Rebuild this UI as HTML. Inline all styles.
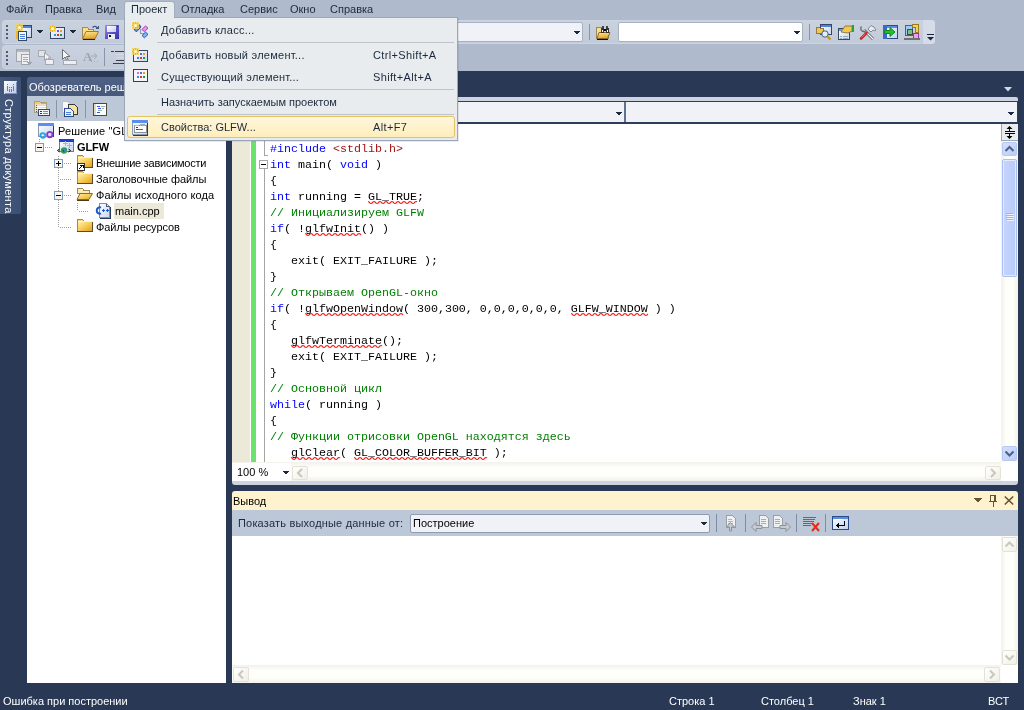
<!DOCTYPE html><html><head><meta charset="utf-8"><style>
*{margin:0;padding:0;box-sizing:border-box}
html,body{width:1024px;height:710px;overflow:hidden;background:#293955;font-family:"Liberation Sans",sans-serif;font-size:11px;color:#000}
.a{position:absolute}
svg{position:absolute;overflow:visible}
.t{position:absolute;white-space:nowrap;font-size:11px;line-height:13px}
.tb{position:absolute;border-radius:3px;background:linear-gradient(#CAD2DF,#C2CBDA);border:1px solid #CDD4E0}
.pn{position:absolute;background:#fff}
.code{position:absolute;left:270px;font-family:"Liberation Mono",monospace;font-size:11.67px;line-height:16px;white-space:pre;color:#000}
.kw{color:#0000FF}.cm{color:#008000}.st{color:#A31515}
.t,.code{will-change:transform}
</style></head><body>
<div class="a" style="left:0px;top:0px;width:1024px;height:71px;background:#AFBACD"></div>
<div class="t" style="left:6px;top:3px;color:#1B293E">Файл</div>
<div class="t" style="left:45px;top:3px;color:#1B293E">Правка</div>
<div class="t" style="left:96px;top:3px;color:#1B293E">Вид</div>
<div class="t" style="left:181px;top:3px;color:#1B293E">Отладка</div>
<div class="t" style="left:240px;top:3px;color:#1B293E">Сервис</div>
<div class="t" style="left:290px;top:3px;color:#1B293E">Окно</div>
<div class="t" style="left:330px;top:3px;color:#1B293E">Справка</div>
<div class="tb" style="left:2px;top:20px;width:922px;height:24px"></div>
<div class="a" style="left:923px;top:20px;width:12px;height:24px;background:#D5DCE8;border-radius:0 3px 3px 0"></div>
<div class="tb" style="left:2px;top:45px;width:200px;height:24px"></div>
<div class="a" style="left:6px;top:25px;width:2px;height:2px;background:#4B5B75"></div>
<div class="a" style="left:6px;top:29px;width:2px;height:2px;background:#4B5B75"></div>
<div class="a" style="left:6px;top:33px;width:2px;height:2px;background:#4B5B75"></div>
<div class="a" style="left:6px;top:37px;width:2px;height:2px;background:#4B5B75"></div>
<div class="a" style="left:6px;top:51px;width:2px;height:2px;background:#4B5B75"></div>
<div class="a" style="left:6px;top:55px;width:2px;height:2px;background:#4B5B75"></div>
<div class="a" style="left:6px;top:59px;width:2px;height:2px;background:#4B5B75"></div>
<div class="a" style="left:6px;top:63px;width:2px;height:2px;background:#4B5B75"></div>
<svg style="left:16px;top:24px;" width="17" height="17" viewBox="0 0 17 17" shape-rendering="crispEdges">
<defs><linearGradient id="wg" x1="0" y1="0" x2="1" y2="1"><stop offset="0" stop-color="#FFFFFF"/><stop offset="1" stop-color="#C8D6F0"/></linearGradient></defs>
<rect x="3.5" y="1.5" width="12" height="12" fill="url(#wg)" stroke="#34466A"/>
<rect x="4" y="2" width="11" height="2" fill="#4D86D9"/>
<rect x="2.5" y="7.5" width="8" height="9" fill="#F4F7FD" stroke="#34466A"/>
<rect x="0" y="7" width="2" height="8" fill="#F0B828"/>
<path d="M4 10h5M4 12h5M4 14h5" stroke="#4A7ED6"/>
<g shape-rendering="auto"><rect x="0" y="0" width="7" height="7" fill="#F3D35A" opacity="0.85"/><path d="M3.5 0v7M0 3.5h7M1 1l5 5M6 1l-5 5" stroke="#E8B820" stroke-width="1"/><circle cx="3.5" cy="3.5" r="1.6" fill="#FFFBE0"/></g></svg>
<svg style="left:37px;top:30px;" width="6" height="3" viewBox="0 0 6 3" shape-rendering="crispEdges"><rect x="0" y="0" width="6" height="1" fill="#1B293E"/><rect x="1" y="1" width="4" height="1" fill="#1B293E"/><rect x="2" y="2" width="2" height="1" fill="#1B293E"/></svg>
<svg style="left:49px;top:25px;" width="17" height="15" viewBox="0 0 17 15" shape-rendering="crispEdges">
<rect x="1.5" y="2.5" width="14" height="11" fill="url(#wg)" stroke="#34466A"/>
<rect x="8" y="5" width="2" height="2" fill="#6B5CE0"/><rect x="11" y="5" width="2" height="2" fill="#F29A1F"/>
<rect x="5" y="9" width="2" height="2" fill="#2E8DE8"/><rect x="8" y="9" width="2" height="2" fill="#E8351E"/><rect x="11" y="9" width="2" height="2" fill="#1E9A2E"/>
<g shape-rendering="auto"><rect x="0" y="0" width="7" height="7" fill="#F3D35A" opacity="0.85"/><path d="M3.5 0v7M0 3.5h7M1 1l5 5M6 1l-5 5" stroke="#E8B820" stroke-width="1"/><circle cx="3.5" cy="3.5" r="1.6" fill="#FFFBE0"/></g></svg>
<svg style="left:70px;top:30px;" width="6" height="3" viewBox="0 0 6 3" shape-rendering="crispEdges"><rect x="0" y="0" width="6" height="1" fill="#1B293E"/><rect x="1" y="1" width="4" height="1" fill="#1B293E"/><rect x="2" y="2" width="2" height="1" fill="#1B293E"/></svg>
<svg style="left:82px;top:25px;" width="17" height="15" viewBox="0 0 17 15" shape-rendering="crispEdges">
<defs><linearGradient id="ff" x1="0" y1="0" x2="0.3" y2="1"><stop offset="0" stop-color="#FFE894"/><stop offset="1" stop-color="#E4A626"/></linearGradient>
<linearGradient id="sv" x1="0" y1="0" x2="1" y2="1"><stop offset="0" stop-color="#9A94F4"/><stop offset="0.5" stop-color="#5C54D0"/><stop offset="1" stop-color="#3A32A0"/></linearGradient>
<linearGradient id="svl" x1="0" y1="0" x2="1" y2="1"><stop offset="0" stop-color="#FFFFFF"/><stop offset="1" stop-color="#C8CCE8"/></linearGradient></defs>
<path d="M0.5 2.5h5l1 1.5h5v9.5h-11z" fill="#F8E08A" stroke="#A08A5A"/>
<path d="M4 6.5h12.5l-3.5 7.5h-12.5z" fill="url(#ff)" stroke="#9A7A3A" shape-rendering="auto"/>
<path d="M1 14h12" stroke="#2A2010"/>
<path d="M10.5 2.5q2.5-2.5 5 0.5" stroke="#3A5A8A" fill="none" stroke-width="1.2" shape-rendering="auto"/>
<path d="M13.5 3.5h3v-3z" fill="#3A5A8A"/>
</svg>
<svg style="left:105px;top:25px;" width="14" height="14" viewBox="0 0 14 14" shape-rendering="crispEdges">
<rect x="0" y="0" width="14" height="14" fill="url(#sv)"/>
<rect x="2" y="1" width="9" height="6" fill="url(#svl)"/>
<rect x="3" y="9" width="7" height="5" fill="#ECECF4"/>
<rect x="4" y="10" width="2" height="2" fill="#111"/>
<rect x="12" y="1" width="1" height="1" fill="#222"/>
</svg>
<svg style="left:16px;top:49px;" width="17" height="17" viewBox="0 0 17 17" shape-rendering="crispEdges">
<rect x="0.5" y="0.5" width="13" height="12" fill="#E6E8EC" stroke="#9FA3AA"/>
<rect x="1" y="1" width="12" height="2" fill="#B5B9BF"/>
<rect x="5.5" y="5.5" width="8" height="10" fill="#F0F1F3" stroke="#9FA3AA"/>
<path d="M7 8h5M7 10h5M7 12h5" stroke="#A8ACB3"/>
<path d="M13.5 9v6M11.5 13l2 2.5l2-2.5" stroke="#9FA3AA" fill="none"/>
</svg>
<svg style="left:38px;top:50px;" width="16" height="15" viewBox="0 0 16 15" shape-rendering="crispEdges">
<rect x="0.5" y="0.5" width="7" height="6" fill="#E2E4E8" stroke="#A6AAB0"/>
<path d="M6.5 2.5v8l2-2l2 4l1.5-.7l-2-3.8h3z" fill="#F2F3F5" stroke="#9FA3AA" shape-rendering="auto"/>
<rect x="7.5" y="9.5" width="8" height="5" fill="#EEEFF2" stroke="#A6AAB0"/>
</svg>
<svg style="left:61px;top:49px;" width="16" height="17" viewBox="0 0 16 17" shape-rendering="crispEdges">
<path d="M1.5 0.5v10l2.5-2.5l2 4.5l1.5-.7l-2-4.3h3.5z" fill="#F4F5F7" stroke="#6C7078" shape-rendering="auto"/>
<rect x="2.5" y="11.5" width="13" height="4" fill="#EEEFF2" stroke="#A6AAB0"/>
</svg>
<div class="t" style="left:83px;top:50px;font-family:'Liberation Serif',serif;font-size:13px;color:#9FA3AA;font-weight:bold">A</div>
<svg style="left:91px;top:52px;" width="8" height="10" viewBox="0 0 8 10" shape-rendering="crispEdges"><path d="M0 4h6M3 1l3 3l-3 3" stroke="#A6AAB0" fill="none" shape-rendering="auto"/><path d="M0 9h1M3 9h1M6 9h1" stroke="#A6AAB0"/></svg>
<div class="a" style="left:104px;top:48px;width:1px;height:18px;background:#8894A8"></div>
<svg style="left:111px;top:50px;" width="15" height="15" viewBox="0 0 15 15" shape-rendering="crispEdges"><path d="M0 1h3M4 1h11M5 10h10M2 13h13" stroke="#3A3F48"/><path d="M5 4h10M5 7h10" stroke="#D8DBE0"/></svg>
<div class="a" style="left:440px;top:22px;width:143px;height:20px;background:#F0F2F7;border:1px solid #A7B2C3;border-radius:2px"></div>
<svg style="left:574px;top:31px;" width="6" height="3" viewBox="0 0 6 3" shape-rendering="crispEdges"><rect x="0" y="0" width="6" height="1" fill="#1B293E"/><rect x="1" y="1" width="4" height="1" fill="#1B293E"/><rect x="2" y="2" width="2" height="1" fill="#1B293E"/></svg>
<div class="a" style="left:589px;top:24px;width:1px;height:16px;background:#8894A8"></div>
<svg style="left:596px;top:25px;" width="17" height="15" viewBox="0 0 17 15" shape-rendering="crispEdges">
<path d="M0.5 2.5h6v1.5h6v9.5h-12z" fill="#F8E08A" stroke="#9A8A60"/>
<path d="M3 7.5h11l-2.5 6h-10.5z" fill="url(#ff)" stroke="#8A6A2A" shape-rendering="auto"/>
<path d="M1 14h11" stroke="#111"/>
<rect x="6" y="1" width="2" height="2" fill="#444"/><rect x="10" y="1" width="2" height="2" fill="#444"/>
<rect x="5" y="3" width="3" height="5" fill="#333"/><rect x="10" y="3" width="3" height="5" fill="#333"/>
<rect x="8" y="4" width="2" height="2" fill="#000"/>
<rect x="6" y="5" width="1" height="2" fill="#fff"/><rect x="11" y="5" width="1" height="2" fill="#fff"/>
</svg>
<div class="a" style="left:618px;top:22px;width:185px;height:20px;background:#fff;border:1px solid #A7B2C3;border-radius:2px"></div>
<svg style="left:794px;top:31px;" width="6" height="3" viewBox="0 0 6 3" shape-rendering="crispEdges"><rect x="0" y="0" width="6" height="1" fill="#1B293E"/><rect x="1" y="1" width="4" height="1" fill="#1B293E"/><rect x="2" y="2" width="2" height="1" fill="#1B293E"/></svg>
<div class="a" style="left:809px;top:24px;width:1px;height:16px;background:#8894A8"></div>
<svg style="left:816px;top:24px;" width="17" height="16" viewBox="0 0 17 16" shape-rendering="crispEdges">
<rect x="4.5" y="0.5" width="11" height="10" fill="url(#wg)" stroke="#34466A"/>
<rect x="5" y="1" width="10" height="2" fill="#4D86D9"/>
<path d="M0.5 3.5h3l1 1h3v5h-7z" fill="#F4C64A" stroke="#8C7A4A"/>
<circle cx="9" cy="10" r="3.2" fill="#DDF0FA" stroke="#4A5A72" shape-rendering="auto"/>
<path d="M11.5 12.5l3 3" stroke="#C8941E" stroke-width="2.2" shape-rendering="auto"/>
</svg>
<svg style="left:838px;top:24px;" width="17" height="16" viewBox="0 0 17 16" shape-rendering="crispEdges">
<rect x="0.5" y="4.5" width="11" height="11" fill="url(#wg)" stroke="#3A4A5A"/>
<rect x="1" y="5" width="3" height="2" fill="#6A9AE0"/>
<path d="M2 12h2M5 12h5M2 14h2M5 14h5" stroke="#9AAAC0"/>
<path d="M3 8l4-6h7v5l-4 2z" fill="#F4C84A" stroke="#7A6A3A" stroke-width="0.8" shape-rendering="auto"/>
<rect x="14" y="1" width="2" height="7" fill="#2AA03A"/>
</svg>
<svg style="left:859px;top:25px;" width="18" height="15" viewBox="0 0 18 15" shape-rendering="crispEdges">
<g shape-rendering="auto">
<path d="M5 5l9 9" stroke="#4A4E58" stroke-width="2.6"/>
<path d="M5 5l9 9" stroke="#FFFFFF" stroke-width="1.2"/>
<path d="M2.5 1.5a3 3 0 1 0 4.5 4" fill="none" stroke="#6A707A" stroke-width="1.4"/>
<path d="M9 4l3-3.5l3 1.5l2 3l-1 1l-2-1l-2 2z" fill="#E8EAEE" stroke="#7A808A" stroke-width="0.9"/>
<path d="M2 13.5l5.5-5.5" stroke="#C82828" stroke-width="2.6" stroke-linecap="round"/>
<path d="M2.5 12.5l4-4" stroke="#F07070" stroke-width="0.8"/>
</g>
</svg>
<svg style="left:883px;top:25px;" width="15" height="14" viewBox="0 0 15 14" shape-rendering="crispEdges">
<defs><linearGradient id="gw" x1="0" y1="0" x2="1" y2="1"><stop offset="0" stop-color="#FFFFFF"/><stop offset="1" stop-color="#C0D0F0"/></linearGradient></defs>
<rect x="0.5" y="0.5" width="14" height="13" fill="url(#gw)" stroke="#2A4A8A"/>
<rect x="1" y="1" width="13" height="2" fill="#5A8EE0"/>
<rect x="0" y="0" width="4" height="14" fill="#3C6AC0"/>
<path d="M1.5 5.5h5.5v-3l5 4.5l-5 4.5v-3h-5.5z" fill="#22C030" stroke="#108A1A" shape-rendering="auto"/>
</svg>
<svg style="left:904px;top:24px;" width="17" height="16" viewBox="0 0 17 16" shape-rendering="crispEdges">
<rect x="1.5" y="1.5" width="7" height="10" fill="#9CCCF4" stroke="#2A66C0"/>
<rect x="3.5" y="5.5" width="5" height="5" fill="#7CC080" stroke="#4A4A3A"/>
<path d="M8.5 0.5h6v8h-3v-5h-3z" fill="#F6D050" stroke="#9A7A20"/>
<rect x="9.5" y="9.5" width="5" height="5" fill="#F0A0F0" stroke="#A030A0"/>
<rect x="0" y="14" width="16" height="2" fill="#707070"/>
</svg>
<svg style="left:927px;top:34px;" width="7" height="7" viewBox="0 0 7 7" shape-rendering="crispEdges"><rect x="0" y="0" width="7" height="1" fill="#1B293E"/><path d="M0 3h7l-3.5 3.5z" fill="#1B293E" shape-rendering="auto"/></svg>
<div class="a" style="left:0px;top:77px;width:21px;height:137px;background:linear-gradient(90deg,#44587C,#3C5075);border-radius:0 2px 2px 0"></div>
<svg style="left:4px;top:81px;" width="13" height="13" viewBox="0 0 13 13" shape-rendering="crispEdges">
<defs><linearGradient id="lg" x1="0" y1="0" x2="1" y2="1"><stop offset="0" stop-color="#FFFFFF"/><stop offset="1" stop-color="#B8C8EC"/></linearGradient></defs>
<rect x="0" y="0" width="13" height="13" fill="url(#lg)"/>
<path d="M12.5 1v11.5h-12" stroke="#8090B8" fill="none"/>
<rect x="3" y="3" width="1" height="1" fill="#6A7AA0"/><rect x="9" y="3" width="1" height="1" fill="#6A7AA0"/>
<rect x="3" y="5" width="1" height="5" fill="#6A7AA0"/><rect x="5" y="6" width="1" height="1" fill="#6A7AA0"/><rect x="5" y="8" width="1" height="3" fill="#6A7AA0"/>
<rect x="7" y="6" width="1" height="1" fill="#6A7AA0"/><rect x="7" y="8" width="1" height="3" fill="#6A7AA0"/><rect x="9" y="5" width="1" height="5" fill="#6A7AA0"/>
</svg>
<div class="t" style="left:15px;top:99px;color:#fff;transform-origin:0 0;transform:rotate(90deg);letter-spacing:0.3px">Структура документа</div>
<div class="a" style="left:27px;top:77px;width:199px;height:19px;background:linear-gradient(#4F6285,#46597B);border-radius:3px 3px 0 0"></div>
<div class="t" style="left:28.5px;top:81px;color:#fff">Обозреватель решений - GLFW</div>
<div class="a" style="left:27px;top:96px;width:199px;height:25px;background:#BCC7D8"></div>
<svg style="left:34px;top:101px;" width="16" height="15" viewBox="0 0 16 15" shape-rendering="crispEdges">
<path d="M0.5 0.5h5v1h7v10h-12z" fill="#E8E0C0" stroke="#A8A080"/>
<rect x="1" y="1" width="5" height="2" fill="#F6CC5A"/>
<rect x="7" y="1.5" width="5" height="1.5" fill="#A8B8A8"/>
<path d="M3 5h9M3 7h9" stroke="#FFFFFF"/>
<path d="M2 4h1M2 6h1M2 8h1M2 10h1" stroke="#3A5A9A"/>
<rect x="4.5" y="8.5" width="11" height="6" fill="#F2F5FB" stroke="#34466A"/>
<path d="M6 10h2M6 12h2" stroke="#26365A"/><path d="M9 10h5M9 12h5" stroke="#7A8AA8"/>
</svg>
<div class="a" style="left:56px;top:100px;width:1px;height:18px;background:#8894A8"></div>
<svg style="left:62px;top:101px;" width="16" height="16" viewBox="0 0 16 16" shape-rendering="crispEdges">
<path d="M0.5 0.5h6v10h-6z" fill="#F6F6F6" stroke="#B8B8B8" stroke-dasharray="1 1"/>
<path d="M6.5 3.5h6l2.5 2.5v7.5h-8.5z" fill="#F6E2A0" stroke="#3A3A3A"/>
<path d="M2.5 7.5h6l2.5 2.5v5.5h-8.5z" fill="#E8F0FC" stroke="#2A4A8A"/>
<path d="M4 11h5M4 13h5" stroke="#4A7ED6"/>
</svg>
<div class="a" style="left:85px;top:100px;width:1px;height:18px;background:#8894A8"></div>
<svg style="left:93px;top:103px;" width="14" height="13" viewBox="0 0 14 13" shape-rendering="crispEdges">
<rect x="0.5" y="0.5" width="13" height="12" fill="#FFFFFF" stroke="#4A4A3A"/>
<rect x="1" y="1" width="2" height="11" fill="#E4DCC0"/>
<path d="M4 3h3M5 5h3M4 9h3" stroke="#2A5AE8"/><path d="M8 3h4M9 5h2M5 7h4" stroke="#9AA"/>
</svg>
<div class="a" style="left:27px;top:121px;width:199px;height:562px;background:#fff"></div>
<svg style="left:38px;top:123px;" width="17" height="17" viewBox="0 0 17 17" shape-rendering="crispEdges">
<rect x="0.5" y="0.5" width="15" height="13" fill="url(#wg)" stroke="#8A96AA"/>
<path d="M15.5 2v12" stroke="#3A3A3A"/>
<rect x="0" y="0" width="16" height="3" fill="#5A8EF0"/>
<g shape-rendering="auto" fill="none" stroke-width="1.8">
<circle cx="4.8" cy="12.5" r="2.4" stroke="#20A8E8"/>
<circle cx="11.8" cy="11.6" r="2.7" stroke="#8A3AC8"/>
</g>
</svg>
<div class="t" style="left:58px;top:125px;letter-spacing:0.15px">Решение "GLFW" (проектов: 1)</div>
<div class="a" style="left:39px;top:139px;width:1px;height:1px;background:#A0A0A0"></div>
<div class="a" style="left:39px;top:141px;width:1px;height:1px;background:#A0A0A0"></div>
<svg style="left:35px;top:143px;" width="9" height="9" viewBox="0 0 9 9" shape-rendering="crispEdges"><rect x="0.5" y="0.5" width="8" height="8" fill="#F6F4EC" stroke="#7F9DB9"/><path d="M2 4.5h5" stroke="#000"/></svg>
<div class="a" style="left:45px;top:147px;width:1px;height:1px;background:#A0A0A0"></div>
<div class="a" style="left:47px;top:147px;width:1px;height:1px;background:#A0A0A0"></div>
<div class="a" style="left:49px;top:147px;width:1px;height:1px;background:#A0A0A0"></div>
<div class="a" style="left:51px;top:147px;width:1px;height:1px;background:#A0A0A0"></div>
<svg style="left:57px;top:139px;" width="17" height="17" viewBox="0 0 17 17" shape-rendering="crispEdges">
<rect x="2.5" y="0.5" width="14" height="12" fill="url(#wg)" stroke="#6A7A9A"/>
<rect x="2" y="0" width="15" height="3" fill="#1A3ED8"/>
<path d="M8.5 2v5M6 4.5h5M12.5 4v5M10 6.5h5" stroke="#E8B820" stroke-width="1.8"/>
<circle cx="7" cy="11.5" r="3.2" fill="#2EA84A" shape-rendering="auto"/>
<path d="M5.5 10.5l2 1l-1 2M8 9l1.5 1.5" stroke="#3A7AD8" stroke-width="1.2" shape-rendering="auto"/>
<path d="M2.5 10l-2 1.5l2 1.5M11.5 10l2 1.5l-2 1.5" stroke="#000" fill="none" shape-rendering="auto"/>
</svg>
<div class="t" style="left:77px;top:141px;font-weight:bold;font-size:11px;letter-spacing:-0.1px">GLFW</div>
<div class="a" style="left:58px;top:156px;width:1px;height:1px;background:#A0A0A0"></div>
<div class="a" style="left:58px;top:158px;width:1px;height:1px;background:#A0A0A0"></div>
<div class="a" style="left:58px;top:160px;width:1px;height:1px;background:#A0A0A0"></div>
<div class="a" style="left:58px;top:162px;width:1px;height:1px;background:#A0A0A0"></div>
<div class="a" style="left:58px;top:164px;width:1px;height:1px;background:#A0A0A0"></div>
<div class="a" style="left:58px;top:166px;width:1px;height:1px;background:#A0A0A0"></div>
<div class="a" style="left:58px;top:168px;width:1px;height:1px;background:#A0A0A0"></div>
<div class="a" style="left:58px;top:170px;width:1px;height:1px;background:#A0A0A0"></div>
<div class="a" style="left:58px;top:172px;width:1px;height:1px;background:#A0A0A0"></div>
<div class="a" style="left:58px;top:174px;width:1px;height:1px;background:#A0A0A0"></div>
<div class="a" style="left:58px;top:176px;width:1px;height:1px;background:#A0A0A0"></div>
<div class="a" style="left:58px;top:178px;width:1px;height:1px;background:#A0A0A0"></div>
<div class="a" style="left:58px;top:180px;width:1px;height:1px;background:#A0A0A0"></div>
<div class="a" style="left:58px;top:182px;width:1px;height:1px;background:#A0A0A0"></div>
<div class="a" style="left:58px;top:184px;width:1px;height:1px;background:#A0A0A0"></div>
<div class="a" style="left:58px;top:186px;width:1px;height:1px;background:#A0A0A0"></div>
<div class="a" style="left:58px;top:188px;width:1px;height:1px;background:#A0A0A0"></div>
<div class="a" style="left:58px;top:190px;width:1px;height:1px;background:#A0A0A0"></div>
<div class="a" style="left:58px;top:192px;width:1px;height:1px;background:#A0A0A0"></div>
<div class="a" style="left:58px;top:194px;width:1px;height:1px;background:#A0A0A0"></div>
<div class="a" style="left:58px;top:196px;width:1px;height:1px;background:#A0A0A0"></div>
<div class="a" style="left:58px;top:198px;width:1px;height:1px;background:#A0A0A0"></div>
<div class="a" style="left:58px;top:200px;width:1px;height:1px;background:#A0A0A0"></div>
<div class="a" style="left:58px;top:202px;width:1px;height:1px;background:#A0A0A0"></div>
<div class="a" style="left:58px;top:204px;width:1px;height:1px;background:#A0A0A0"></div>
<div class="a" style="left:58px;top:206px;width:1px;height:1px;background:#A0A0A0"></div>
<div class="a" style="left:58px;top:208px;width:1px;height:1px;background:#A0A0A0"></div>
<div class="a" style="left:58px;top:210px;width:1px;height:1px;background:#A0A0A0"></div>
<div class="a" style="left:58px;top:212px;width:1px;height:1px;background:#A0A0A0"></div>
<div class="a" style="left:58px;top:214px;width:1px;height:1px;background:#A0A0A0"></div>
<div class="a" style="left:58px;top:216px;width:1px;height:1px;background:#A0A0A0"></div>
<div class="a" style="left:58px;top:218px;width:1px;height:1px;background:#A0A0A0"></div>
<div class="a" style="left:58px;top:220px;width:1px;height:1px;background:#A0A0A0"></div>
<div class="a" style="left:58px;top:222px;width:1px;height:1px;background:#A0A0A0"></div>
<div class="a" style="left:58px;top:224px;width:1px;height:1px;background:#A0A0A0"></div>
<div class="a" style="left:58px;top:226px;width:1px;height:1px;background:#A0A0A0"></div>
<svg width="0" height="0" style="left:0;top:0"><defs><linearGradient id="fg" x1="0" y1="0" x2="1" y2="1"><stop offset="0" stop-color="#FFF0B0"/><stop offset="0.55" stop-color="#F6C850"/><stop offset="1" stop-color="#E0A028"/></linearGradient></defs></svg>
<svg style="left:54px;top:159px;" width="9" height="9" viewBox="0 0 9 9" shape-rendering="crispEdges"><rect x="0.5" y="0.5" width="8" height="8" fill="#F6F4EC" stroke="#7F9DB9"/><path d="M2 4.5h5" stroke="#000"/><path d="M4.5 2v5" stroke="#000"/></svg>
<div class="a" style="left:64px;top:163px;width:1px;height:1px;background:#A0A0A0"></div>
<div class="a" style="left:66px;top:163px;width:1px;height:1px;background:#A0A0A0"></div>
<div class="a" style="left:68px;top:163px;width:1px;height:1px;background:#A0A0A0"></div>
<div class="a" style="left:70px;top:163px;width:1px;height:1px;background:#A0A0A0"></div>
<svg style="left:77px;top:155px;" width="16" height="16" viewBox="0 0 16 16" shape-rendering="crispEdges"><path d="M0.5 0.5h5l1 1.5h8v10.5h-14z" fill="#F6D880" stroke="#A08A5A"/><rect x="1" y="3" width="14" height="9" fill="url(#fg)"/><path d="M0.5 2.5h15" stroke="#FFF4C8"/><path d="M0 12.5h15.5v-10" stroke="#5A4A2A" fill="none"/><rect x="0.5" y="8.5" width="7" height="7" fill="#fff" stroke="#333"/><path d="M2 14l4-4M3 10h3v3" stroke="#000" fill="none"/></svg>
<div class="t" style="left:96px;top:157px;letter-spacing:-0.25px">Внешние зависимости</div>
<div class="a" style="left:60px;top:179px;width:1px;height:1px;background:#A0A0A0"></div>
<div class="a" style="left:62px;top:179px;width:1px;height:1px;background:#A0A0A0"></div>
<div class="a" style="left:64px;top:179px;width:1px;height:1px;background:#A0A0A0"></div>
<div class="a" style="left:66px;top:179px;width:1px;height:1px;background:#A0A0A0"></div>
<div class="a" style="left:68px;top:179px;width:1px;height:1px;background:#A0A0A0"></div>
<div class="a" style="left:70px;top:179px;width:1px;height:1px;background:#A0A0A0"></div>
<svg style="left:77px;top:171px;" width="16" height="16" viewBox="0 0 16 16" shape-rendering="crispEdges"><path d="M0.5 0.5h5l1 1.5h8v10.5h-14z" fill="#F6D880" stroke="#A08A5A"/><rect x="1" y="3" width="14" height="9" fill="url(#fg)"/><path d="M0.5 2.5h15" stroke="#FFF4C8"/><path d="M0 12.5h15.5v-10" stroke="#5A4A2A" fill="none"/></svg>
<div class="t" style="left:96px;top:173px;letter-spacing:-0.05px">Заголовочные файлы</div>
<svg style="left:54px;top:191px;" width="9" height="9" viewBox="0 0 9 9" shape-rendering="crispEdges"><rect x="0.5" y="0.5" width="8" height="8" fill="#F6F4EC" stroke="#7F9DB9"/><path d="M2 4.5h5" stroke="#000"/></svg>
<div class="a" style="left:64px;top:195px;width:1px;height:1px;background:#A0A0A0"></div>
<div class="a" style="left:66px;top:195px;width:1px;height:1px;background:#A0A0A0"></div>
<div class="a" style="left:68px;top:195px;width:1px;height:1px;background:#A0A0A0"></div>
<div class="a" style="left:70px;top:195px;width:1px;height:1px;background:#A0A0A0"></div>
<svg style="left:77px;top:187px;" width="16" height="16" viewBox="0 0 16 16" shape-rendering="crispEdges"><path d="M0.5 1.5h5l1 1.5h6v3h-12z" fill="#FBEBB8" stroke="#A08A5A"/><path d="M3 6.5h12.5l-3.5 6h-12z" fill="url(#fg)" stroke="#8A6A2A" shape-rendering="auto"/><path d="M0 13h12" stroke="#4A3A1A"/></svg>
<div class="t" style="left:96px;top:189px;letter-spacing:0.12px">Файлы исходного кода</div>
<div class="a" style="left:77px;top:203px;width:1px;height:1px;background:#A0A0A0"></div>
<div class="a" style="left:77px;top:205px;width:1px;height:1px;background:#A0A0A0"></div>
<div class="a" style="left:77px;top:207px;width:1px;height:1px;background:#A0A0A0"></div>
<div class="a" style="left:77px;top:209px;width:1px;height:1px;background:#A0A0A0"></div>
<div class="a" style="left:79px;top:211px;width:1px;height:1px;background:#A0A0A0"></div>
<div class="a" style="left:81px;top:211px;width:1px;height:1px;background:#A0A0A0"></div>
<div class="a" style="left:83px;top:211px;width:1px;height:1px;background:#A0A0A0"></div>
<div class="a" style="left:85px;top:211px;width:1px;height:1px;background:#A0A0A0"></div>
<div class="a" style="left:87px;top:211px;width:1px;height:1px;background:#A0A0A0"></div>
<svg style="left:95px;top:203px;" width="17" height="16" viewBox="0 0 17 16" shape-rendering="crispEdges">
<path d="M4.5 0.5h7l3 3v11h-10z" fill="url(#wg)" stroke="#7A90B8"/>
<path d="M15 4v11h-10" stroke="#2A3A5A" fill="none"/>
<path d="M11.5 0.5v3h3" stroke="#4A5A7A" fill="none"/>
<path d="M6 4.6a3 3.2 0 1 0 0 5.8" stroke="#1A5AC8" stroke-width="2" fill="none" shape-rendering="auto"/>
<path d="M7 7.5h3M8.5 6v3M11 7.5h3M12.5 6v3" stroke="#1A5AC8" stroke-width="1.2"/>
</svg>
<div class="a" style="left:114px;top:203px;width:50px;height:16px;background:#ECE9D8"></div>
<div class="t" style="left:115px;top:205px;">main.cpp</div>
<div class="a" style="left:60px;top:227px;width:1px;height:1px;background:#A0A0A0"></div>
<div class="a" style="left:62px;top:227px;width:1px;height:1px;background:#A0A0A0"></div>
<div class="a" style="left:64px;top:227px;width:1px;height:1px;background:#A0A0A0"></div>
<div class="a" style="left:66px;top:227px;width:1px;height:1px;background:#A0A0A0"></div>
<div class="a" style="left:68px;top:227px;width:1px;height:1px;background:#A0A0A0"></div>
<div class="a" style="left:70px;top:227px;width:1px;height:1px;background:#A0A0A0"></div>
<svg style="left:77px;top:219px;" width="16" height="16" viewBox="0 0 16 16" shape-rendering="crispEdges"><path d="M0.5 0.5h5l1 1.5h8v10.5h-14z" fill="#F6D880" stroke="#A08A5A"/><rect x="1" y="3" width="14" height="9" fill="url(#fg)"/><path d="M0.5 2.5h15" stroke="#FFF4C8"/><path d="M0 12.5h15.5v-10" stroke="#5A4A2A" fill="none"/></svg>
<div class="t" style="left:96px;top:221px;letter-spacing:-0.07px">Файлы ресурсов</div>
<div class="a" style="left:232px;top:97px;width:786px;height:4px;background:#CED4DF;border-radius:0 2px 0 0"></div>
<div class="a" style="left:232px;top:101px;width:786px;height:23px;background:#2E3D59"></div>
<div class="a" style="left:232px;top:102px;width:392px;height:20px;background:#F0F2F7"></div>
<div class="a" style="left:626px;top:102px;width:391px;height:20px;background:#F0F2F7"></div>
<div class="a" style="left:624px;top:102px;width:2px;height:20px;background:#62718C"></div>
<svg style="left:616px;top:112px;" width="6" height="3" viewBox="0 0 6 3" shape-rendering="crispEdges"><rect x="0" y="0" width="6" height="1" fill="#1B293E"/><rect x="1" y="1" width="4" height="1" fill="#1B293E"/><rect x="2" y="2" width="2" height="1" fill="#1B293E"/></svg>
<svg style="left:1008px;top:112px;" width="6" height="3" viewBox="0 0 6 3" shape-rendering="crispEdges"><rect x="0" y="0" width="6" height="1" fill="#1B293E"/><rect x="1" y="1" width="4" height="1" fill="#1B293E"/><rect x="2" y="2" width="2" height="1" fill="#1B293E"/></svg>
<svg style="left:1004px;top:87px;" width="8" height="5" viewBox="0 0 8 5" shape-rendering="crispEdges"><path d="M0 0h8l-4 4.5z" fill="#D3D9E4" shape-rendering="auto"/></svg>
<div class="a" style="left:232px;top:124px;width:786px;height:338px;background:#fff"></div>
<div class="a" style="left:232px;top:124px;width:18px;height:338px;background:#ECE9D8"></div>
<div class="a" style="left:251px;top:124px;width:5px;height:338px;background:#6CE26C"></div>
<div class="a" style="left:264px;top:124px;width:1px;height:31px;background:#A5A5A5"></div>
<div class="a" style="left:264px;top:155px;width:4px;height:1px;background:#A5A5A5"></div>
<svg style="left:259px;top:160px;" width="9" height="9" viewBox="0 0 9 9" shape-rendering="crispEdges"><rect x="0.5" y="0.5" width="8" height="8" fill="#fff" stroke="#A5A5A5"/><path d="M2 4.5h5" stroke="#000"/></svg>
<div class="a" style="left:264px;top:169px;width:1px;height:293px;background:#A5A5A5"></div>
<div class="code" style="top:141px;height:322px;overflow:hidden"><span class="kw">#include</span> <span class="st">&lt;stdlib.h&gt;</span>
<span class="kw">int</span> main( <span class="kw">void</span> )
{
<span class="kw">int</span> running = GL_TRUE;
<span class="cm">// Инициализируем GLFW</span>
<span class="kw">if</span>( !glfwInit() )
{
   exit( EXIT_FAILURE );
}
<span class="cm">// Открываем OpenGL-окно</span>
<span class="kw">if</span>( !glfwOpenWindow( 300,300, 0,0,0,0,0,0, GLFW_WINDOW ) )
{
   glfwTerminate();
   exit( EXIT_FAILURE );
}
<span class="cm">// Основной цикл</span>
<span class="kw">while</span>( running )
{
<span class="cm">// Функции отрисовки OpenGL находятся здесь</span>
   glClear( GL_COLOR_BUFFER_BIT );</div>
<svg style="left:368px;top:201px" width="49" height="3" viewBox="0 0 49 3"><polyline points="0.00,0.50 0.25,0.53 0.50,0.63 0.75,0.79 1.00,1.00 1.25,1.24 1.50,1.50 1.75,1.76 2.00,2.00 2.25,2.21 2.50,2.37 2.75,2.47 3.00,2.50 3.25,2.47 3.50,2.37 3.75,2.21 4.00,2.00 4.25,1.76 4.50,1.50 4.75,1.24 5.00,1.00 5.25,0.79 5.50,0.63 5.75,0.53 6.00,0.50 6.25,0.53 6.50,0.63 6.75,0.79 7.00,1.00 7.25,1.24 7.50,1.50 7.75,1.76 8.00,2.00 8.25,2.21 8.50,2.37 8.75,2.47 9.00,2.50 9.25,2.47 9.50,2.37 9.75,2.21 10.00,2.00 10.25,1.76 10.50,1.50 10.75,1.24 11.00,1.00 11.25,0.79 11.50,0.63 11.75,0.53 12.00,0.50 12.25,0.53 12.50,0.63 12.75,0.79 13.00,1.00 13.25,1.24 13.50,1.50 13.75,1.76 14.00,2.00 14.25,2.21 14.50,2.37 14.75,2.47 15.00,2.50 15.25,2.47 15.50,2.37 15.75,2.21 16.00,2.00 16.25,1.76 16.50,1.50 16.75,1.24 17.00,1.00 17.25,0.79 17.50,0.63 17.75,0.53 18.00,0.50 18.25,0.53 18.50,0.63 18.75,0.79 19.00,1.00 19.25,1.24 19.50,1.50 19.75,1.76 20.00,2.00 20.25,2.21 20.50,2.37 20.75,2.47 21.00,2.50 21.25,2.47 21.50,2.37 21.75,2.21 22.00,2.00 22.25,1.76 22.50,1.50 22.75,1.24 23.00,1.00 23.25,0.79 23.50,0.63 23.75,0.53 24.00,0.50 24.25,0.53 24.50,0.63 24.75,0.79 25.00,1.00 25.25,1.24 25.50,1.50 25.75,1.76 26.00,2.00 26.25,2.21 26.50,2.37 26.75,2.47 27.00,2.50 27.25,2.47 27.50,2.37 27.75,2.21 28.00,2.00 28.25,1.76 28.50,1.50 28.75,1.24 29.00,1.00 29.25,0.79 29.50,0.63 29.75,0.53 30.00,0.50 30.25,0.53 30.50,0.63 30.75,0.79 31.00,1.00 31.25,1.24 31.50,1.50 31.75,1.76 32.00,2.00 32.25,2.21 32.50,2.37 32.75,2.47 33.00,2.50 33.25,2.47 33.50,2.37 33.75,2.21 34.00,2.00 34.25,1.76 34.50,1.50 34.75,1.24 35.00,1.00 35.25,0.79 35.50,0.63 35.75,0.53 36.00,0.50 36.25,0.53 36.50,0.63 36.75,0.79 37.00,1.00 37.25,1.24 37.50,1.50 37.75,1.76 38.00,2.00 38.25,2.21 38.50,2.37 38.75,2.47 39.00,2.50 39.25,2.47 39.50,2.37 39.75,2.21 40.00,2.00 40.25,1.76 40.50,1.50 40.75,1.24 41.00,1.00 41.25,0.79 41.50,0.63 41.75,0.53 42.00,0.50 42.25,0.53 42.50,0.63 42.75,0.79 43.00,1.00 43.25,1.24 43.50,1.50 43.75,1.76 44.00,2.00 44.25,2.21 44.50,2.37 44.75,2.47 45.00,2.50 45.25,2.47 45.50,2.37 45.75,2.21 46.00,2.00 46.25,1.76 46.50,1.50 46.75,1.24 47.00,1.00 47.25,0.79 47.50,0.63 47.75,0.53 48.00,0.50 48.25,0.53 48.50,0.63 48.75,0.79 49.00,1.00" fill="none" stroke="#FF2020" stroke-width="1.1"/></svg>
<svg style="left:305px;top:233px" width="56" height="3" viewBox="0 0 56 3"><polyline points="0.00,0.50 0.25,0.53 0.50,0.63 0.75,0.79 1.00,1.00 1.25,1.24 1.50,1.50 1.75,1.76 2.00,2.00 2.25,2.21 2.50,2.37 2.75,2.47 3.00,2.50 3.25,2.47 3.50,2.37 3.75,2.21 4.00,2.00 4.25,1.76 4.50,1.50 4.75,1.24 5.00,1.00 5.25,0.79 5.50,0.63 5.75,0.53 6.00,0.50 6.25,0.53 6.50,0.63 6.75,0.79 7.00,1.00 7.25,1.24 7.50,1.50 7.75,1.76 8.00,2.00 8.25,2.21 8.50,2.37 8.75,2.47 9.00,2.50 9.25,2.47 9.50,2.37 9.75,2.21 10.00,2.00 10.25,1.76 10.50,1.50 10.75,1.24 11.00,1.00 11.25,0.79 11.50,0.63 11.75,0.53 12.00,0.50 12.25,0.53 12.50,0.63 12.75,0.79 13.00,1.00 13.25,1.24 13.50,1.50 13.75,1.76 14.00,2.00 14.25,2.21 14.50,2.37 14.75,2.47 15.00,2.50 15.25,2.47 15.50,2.37 15.75,2.21 16.00,2.00 16.25,1.76 16.50,1.50 16.75,1.24 17.00,1.00 17.25,0.79 17.50,0.63 17.75,0.53 18.00,0.50 18.25,0.53 18.50,0.63 18.75,0.79 19.00,1.00 19.25,1.24 19.50,1.50 19.75,1.76 20.00,2.00 20.25,2.21 20.50,2.37 20.75,2.47 21.00,2.50 21.25,2.47 21.50,2.37 21.75,2.21 22.00,2.00 22.25,1.76 22.50,1.50 22.75,1.24 23.00,1.00 23.25,0.79 23.50,0.63 23.75,0.53 24.00,0.50 24.25,0.53 24.50,0.63 24.75,0.79 25.00,1.00 25.25,1.24 25.50,1.50 25.75,1.76 26.00,2.00 26.25,2.21 26.50,2.37 26.75,2.47 27.00,2.50 27.25,2.47 27.50,2.37 27.75,2.21 28.00,2.00 28.25,1.76 28.50,1.50 28.75,1.24 29.00,1.00 29.25,0.79 29.50,0.63 29.75,0.53 30.00,0.50 30.25,0.53 30.50,0.63 30.75,0.79 31.00,1.00 31.25,1.24 31.50,1.50 31.75,1.76 32.00,2.00 32.25,2.21 32.50,2.37 32.75,2.47 33.00,2.50 33.25,2.47 33.50,2.37 33.75,2.21 34.00,2.00 34.25,1.76 34.50,1.50 34.75,1.24 35.00,1.00 35.25,0.79 35.50,0.63 35.75,0.53 36.00,0.50 36.25,0.53 36.50,0.63 36.75,0.79 37.00,1.00 37.25,1.24 37.50,1.50 37.75,1.76 38.00,2.00 38.25,2.21 38.50,2.37 38.75,2.47 39.00,2.50 39.25,2.47 39.50,2.37 39.75,2.21 40.00,2.00 40.25,1.76 40.50,1.50 40.75,1.24 41.00,1.00 41.25,0.79 41.50,0.63 41.75,0.53 42.00,0.50 42.25,0.53 42.50,0.63 42.75,0.79 43.00,1.00 43.25,1.24 43.50,1.50 43.75,1.76 44.00,2.00 44.25,2.21 44.50,2.37 44.75,2.47 45.00,2.50 45.25,2.47 45.50,2.37 45.75,2.21 46.00,2.00 46.25,1.76 46.50,1.50 46.75,1.24 47.00,1.00 47.25,0.79 47.50,0.63 47.75,0.53 48.00,0.50 48.25,0.53 48.50,0.63 48.75,0.79 49.00,1.00 49.25,1.24 49.50,1.50 49.75,1.76 50.00,2.00 50.25,2.21 50.50,2.37 50.75,2.47 51.00,2.50 51.25,2.47 51.50,2.37 51.75,2.21 52.00,2.00 52.25,1.76 52.50,1.50 52.75,1.24 53.00,1.00 53.25,0.79 53.50,0.63 53.75,0.53 54.00,0.50 54.25,0.53 54.50,0.63 54.75,0.79 55.00,1.00 55.25,1.24 55.50,1.50 55.75,1.76 56.00,2.00" fill="none" stroke="#FF2020" stroke-width="1.1"/></svg>
<svg style="left:305px;top:313px" width="98" height="3" viewBox="0 0 98 3"><polyline points="0.00,0.50 0.25,0.53 0.50,0.63 0.75,0.79 1.00,1.00 1.25,1.24 1.50,1.50 1.75,1.76 2.00,2.00 2.25,2.21 2.50,2.37 2.75,2.47 3.00,2.50 3.25,2.47 3.50,2.37 3.75,2.21 4.00,2.00 4.25,1.76 4.50,1.50 4.75,1.24 5.00,1.00 5.25,0.79 5.50,0.63 5.75,0.53 6.00,0.50 6.25,0.53 6.50,0.63 6.75,0.79 7.00,1.00 7.25,1.24 7.50,1.50 7.75,1.76 8.00,2.00 8.25,2.21 8.50,2.37 8.75,2.47 9.00,2.50 9.25,2.47 9.50,2.37 9.75,2.21 10.00,2.00 10.25,1.76 10.50,1.50 10.75,1.24 11.00,1.00 11.25,0.79 11.50,0.63 11.75,0.53 12.00,0.50 12.25,0.53 12.50,0.63 12.75,0.79 13.00,1.00 13.25,1.24 13.50,1.50 13.75,1.76 14.00,2.00 14.25,2.21 14.50,2.37 14.75,2.47 15.00,2.50 15.25,2.47 15.50,2.37 15.75,2.21 16.00,2.00 16.25,1.76 16.50,1.50 16.75,1.24 17.00,1.00 17.25,0.79 17.50,0.63 17.75,0.53 18.00,0.50 18.25,0.53 18.50,0.63 18.75,0.79 19.00,1.00 19.25,1.24 19.50,1.50 19.75,1.76 20.00,2.00 20.25,2.21 20.50,2.37 20.75,2.47 21.00,2.50 21.25,2.47 21.50,2.37 21.75,2.21 22.00,2.00 22.25,1.76 22.50,1.50 22.75,1.24 23.00,1.00 23.25,0.79 23.50,0.63 23.75,0.53 24.00,0.50 24.25,0.53 24.50,0.63 24.75,0.79 25.00,1.00 25.25,1.24 25.50,1.50 25.75,1.76 26.00,2.00 26.25,2.21 26.50,2.37 26.75,2.47 27.00,2.50 27.25,2.47 27.50,2.37 27.75,2.21 28.00,2.00 28.25,1.76 28.50,1.50 28.75,1.24 29.00,1.00 29.25,0.79 29.50,0.63 29.75,0.53 30.00,0.50 30.25,0.53 30.50,0.63 30.75,0.79 31.00,1.00 31.25,1.24 31.50,1.50 31.75,1.76 32.00,2.00 32.25,2.21 32.50,2.37 32.75,2.47 33.00,2.50 33.25,2.47 33.50,2.37 33.75,2.21 34.00,2.00 34.25,1.76 34.50,1.50 34.75,1.24 35.00,1.00 35.25,0.79 35.50,0.63 35.75,0.53 36.00,0.50 36.25,0.53 36.50,0.63 36.75,0.79 37.00,1.00 37.25,1.24 37.50,1.50 37.75,1.76 38.00,2.00 38.25,2.21 38.50,2.37 38.75,2.47 39.00,2.50 39.25,2.47 39.50,2.37 39.75,2.21 40.00,2.00 40.25,1.76 40.50,1.50 40.75,1.24 41.00,1.00 41.25,0.79 41.50,0.63 41.75,0.53 42.00,0.50 42.25,0.53 42.50,0.63 42.75,0.79 43.00,1.00 43.25,1.24 43.50,1.50 43.75,1.76 44.00,2.00 44.25,2.21 44.50,2.37 44.75,2.47 45.00,2.50 45.25,2.47 45.50,2.37 45.75,2.21 46.00,2.00 46.25,1.76 46.50,1.50 46.75,1.24 47.00,1.00 47.25,0.79 47.50,0.63 47.75,0.53 48.00,0.50 48.25,0.53 48.50,0.63 48.75,0.79 49.00,1.00 49.25,1.24 49.50,1.50 49.75,1.76 50.00,2.00 50.25,2.21 50.50,2.37 50.75,2.47 51.00,2.50 51.25,2.47 51.50,2.37 51.75,2.21 52.00,2.00 52.25,1.76 52.50,1.50 52.75,1.24 53.00,1.00 53.25,0.79 53.50,0.63 53.75,0.53 54.00,0.50 54.25,0.53 54.50,0.63 54.75,0.79 55.00,1.00 55.25,1.24 55.50,1.50 55.75,1.76 56.00,2.00 56.25,2.21 56.50,2.37 56.75,2.47 57.00,2.50 57.25,2.47 57.50,2.37 57.75,2.21 58.00,2.00 58.25,1.76 58.50,1.50 58.75,1.24 59.00,1.00 59.25,0.79 59.50,0.63 59.75,0.53 60.00,0.50 60.25,0.53 60.50,0.63 60.75,0.79 61.00,1.00 61.25,1.24 61.50,1.50 61.75,1.76 62.00,2.00 62.25,2.21 62.50,2.37 62.75,2.47 63.00,2.50 63.25,2.47 63.50,2.37 63.75,2.21 64.00,2.00 64.25,1.76 64.50,1.50 64.75,1.24 65.00,1.00 65.25,0.79 65.50,0.63 65.75,0.53 66.00,0.50 66.25,0.53 66.50,0.63 66.75,0.79 67.00,1.00 67.25,1.24 67.50,1.50 67.75,1.76 68.00,2.00 68.25,2.21 68.50,2.37 68.75,2.47 69.00,2.50 69.25,2.47 69.50,2.37 69.75,2.21 70.00,2.00 70.25,1.76 70.50,1.50 70.75,1.24 71.00,1.00 71.25,0.79 71.50,0.63 71.75,0.53 72.00,0.50 72.25,0.53 72.50,0.63 72.75,0.79 73.00,1.00 73.25,1.24 73.50,1.50 73.75,1.76 74.00,2.00 74.25,2.21 74.50,2.37 74.75,2.47 75.00,2.50 75.25,2.47 75.50,2.37 75.75,2.21 76.00,2.00 76.25,1.76 76.50,1.50 76.75,1.24 77.00,1.00 77.25,0.79 77.50,0.63 77.75,0.53 78.00,0.50 78.25,0.53 78.50,0.63 78.75,0.79 79.00,1.00 79.25,1.24 79.50,1.50 79.75,1.76 80.00,2.00 80.25,2.21 80.50,2.37 80.75,2.47 81.00,2.50 81.25,2.47 81.50,2.37 81.75,2.21 82.00,2.00 82.25,1.76 82.50,1.50 82.75,1.24 83.00,1.00 83.25,0.79 83.50,0.63 83.75,0.53 84.00,0.50 84.25,0.53 84.50,0.63 84.75,0.79 85.00,1.00 85.25,1.24 85.50,1.50 85.75,1.76 86.00,2.00 86.25,2.21 86.50,2.37 86.75,2.47 87.00,2.50 87.25,2.47 87.50,2.37 87.75,2.21 88.00,2.00 88.25,1.76 88.50,1.50 88.75,1.24 89.00,1.00 89.25,0.79 89.50,0.63 89.75,0.53 90.00,0.50 90.25,0.53 90.50,0.63 90.75,0.79 91.00,1.00 91.25,1.24 91.50,1.50 91.75,1.76 92.00,2.00 92.25,2.21 92.50,2.37 92.75,2.47 93.00,2.50 93.25,2.47 93.50,2.37 93.75,2.21 94.00,2.00 94.25,1.76 94.50,1.50 94.75,1.24 95.00,1.00 95.25,0.79 95.50,0.63 95.75,0.53 96.00,0.50 96.25,0.53 96.50,0.63 96.75,0.79 97.00,1.00 97.25,1.24 97.50,1.50 97.75,1.76 98.00,2.00" fill="none" stroke="#FF2020" stroke-width="1.1"/></svg>
<svg style="left:571px;top:313px" width="77" height="3" viewBox="0 0 77 3"><polyline points="0.00,0.50 0.25,0.53 0.50,0.63 0.75,0.79 1.00,1.00 1.25,1.24 1.50,1.50 1.75,1.76 2.00,2.00 2.25,2.21 2.50,2.37 2.75,2.47 3.00,2.50 3.25,2.47 3.50,2.37 3.75,2.21 4.00,2.00 4.25,1.76 4.50,1.50 4.75,1.24 5.00,1.00 5.25,0.79 5.50,0.63 5.75,0.53 6.00,0.50 6.25,0.53 6.50,0.63 6.75,0.79 7.00,1.00 7.25,1.24 7.50,1.50 7.75,1.76 8.00,2.00 8.25,2.21 8.50,2.37 8.75,2.47 9.00,2.50 9.25,2.47 9.50,2.37 9.75,2.21 10.00,2.00 10.25,1.76 10.50,1.50 10.75,1.24 11.00,1.00 11.25,0.79 11.50,0.63 11.75,0.53 12.00,0.50 12.25,0.53 12.50,0.63 12.75,0.79 13.00,1.00 13.25,1.24 13.50,1.50 13.75,1.76 14.00,2.00 14.25,2.21 14.50,2.37 14.75,2.47 15.00,2.50 15.25,2.47 15.50,2.37 15.75,2.21 16.00,2.00 16.25,1.76 16.50,1.50 16.75,1.24 17.00,1.00 17.25,0.79 17.50,0.63 17.75,0.53 18.00,0.50 18.25,0.53 18.50,0.63 18.75,0.79 19.00,1.00 19.25,1.24 19.50,1.50 19.75,1.76 20.00,2.00 20.25,2.21 20.50,2.37 20.75,2.47 21.00,2.50 21.25,2.47 21.50,2.37 21.75,2.21 22.00,2.00 22.25,1.76 22.50,1.50 22.75,1.24 23.00,1.00 23.25,0.79 23.50,0.63 23.75,0.53 24.00,0.50 24.25,0.53 24.50,0.63 24.75,0.79 25.00,1.00 25.25,1.24 25.50,1.50 25.75,1.76 26.00,2.00 26.25,2.21 26.50,2.37 26.75,2.47 27.00,2.50 27.25,2.47 27.50,2.37 27.75,2.21 28.00,2.00 28.25,1.76 28.50,1.50 28.75,1.24 29.00,1.00 29.25,0.79 29.50,0.63 29.75,0.53 30.00,0.50 30.25,0.53 30.50,0.63 30.75,0.79 31.00,1.00 31.25,1.24 31.50,1.50 31.75,1.76 32.00,2.00 32.25,2.21 32.50,2.37 32.75,2.47 33.00,2.50 33.25,2.47 33.50,2.37 33.75,2.21 34.00,2.00 34.25,1.76 34.50,1.50 34.75,1.24 35.00,1.00 35.25,0.79 35.50,0.63 35.75,0.53 36.00,0.50 36.25,0.53 36.50,0.63 36.75,0.79 37.00,1.00 37.25,1.24 37.50,1.50 37.75,1.76 38.00,2.00 38.25,2.21 38.50,2.37 38.75,2.47 39.00,2.50 39.25,2.47 39.50,2.37 39.75,2.21 40.00,2.00 40.25,1.76 40.50,1.50 40.75,1.24 41.00,1.00 41.25,0.79 41.50,0.63 41.75,0.53 42.00,0.50 42.25,0.53 42.50,0.63 42.75,0.79 43.00,1.00 43.25,1.24 43.50,1.50 43.75,1.76 44.00,2.00 44.25,2.21 44.50,2.37 44.75,2.47 45.00,2.50 45.25,2.47 45.50,2.37 45.75,2.21 46.00,2.00 46.25,1.76 46.50,1.50 46.75,1.24 47.00,1.00 47.25,0.79 47.50,0.63 47.75,0.53 48.00,0.50 48.25,0.53 48.50,0.63 48.75,0.79 49.00,1.00 49.25,1.24 49.50,1.50 49.75,1.76 50.00,2.00 50.25,2.21 50.50,2.37 50.75,2.47 51.00,2.50 51.25,2.47 51.50,2.37 51.75,2.21 52.00,2.00 52.25,1.76 52.50,1.50 52.75,1.24 53.00,1.00 53.25,0.79 53.50,0.63 53.75,0.53 54.00,0.50 54.25,0.53 54.50,0.63 54.75,0.79 55.00,1.00 55.25,1.24 55.50,1.50 55.75,1.76 56.00,2.00 56.25,2.21 56.50,2.37 56.75,2.47 57.00,2.50 57.25,2.47 57.50,2.37 57.75,2.21 58.00,2.00 58.25,1.76 58.50,1.50 58.75,1.24 59.00,1.00 59.25,0.79 59.50,0.63 59.75,0.53 60.00,0.50 60.25,0.53 60.50,0.63 60.75,0.79 61.00,1.00 61.25,1.24 61.50,1.50 61.75,1.76 62.00,2.00 62.25,2.21 62.50,2.37 62.75,2.47 63.00,2.50 63.25,2.47 63.50,2.37 63.75,2.21 64.00,2.00 64.25,1.76 64.50,1.50 64.75,1.24 65.00,1.00 65.25,0.79 65.50,0.63 65.75,0.53 66.00,0.50 66.25,0.53 66.50,0.63 66.75,0.79 67.00,1.00 67.25,1.24 67.50,1.50 67.75,1.76 68.00,2.00 68.25,2.21 68.50,2.37 68.75,2.47 69.00,2.50 69.25,2.47 69.50,2.37 69.75,2.21 70.00,2.00 70.25,1.76 70.50,1.50 70.75,1.24 71.00,1.00 71.25,0.79 71.50,0.63 71.75,0.53 72.00,0.50 72.25,0.53 72.50,0.63 72.75,0.79 73.00,1.00 73.25,1.24 73.50,1.50 73.75,1.76 74.00,2.00 74.25,2.21 74.50,2.37 74.75,2.47 75.00,2.50 75.25,2.47 75.50,2.37 75.75,2.21 76.00,2.00 76.25,1.76 76.50,1.50 76.75,1.24 77.00,1.00" fill="none" stroke="#FF2020" stroke-width="1.1"/></svg>
<svg style="left:291px;top:345px" width="91" height="3" viewBox="0 0 91 3"><polyline points="0.00,0.50 0.25,0.53 0.50,0.63 0.75,0.79 1.00,1.00 1.25,1.24 1.50,1.50 1.75,1.76 2.00,2.00 2.25,2.21 2.50,2.37 2.75,2.47 3.00,2.50 3.25,2.47 3.50,2.37 3.75,2.21 4.00,2.00 4.25,1.76 4.50,1.50 4.75,1.24 5.00,1.00 5.25,0.79 5.50,0.63 5.75,0.53 6.00,0.50 6.25,0.53 6.50,0.63 6.75,0.79 7.00,1.00 7.25,1.24 7.50,1.50 7.75,1.76 8.00,2.00 8.25,2.21 8.50,2.37 8.75,2.47 9.00,2.50 9.25,2.47 9.50,2.37 9.75,2.21 10.00,2.00 10.25,1.76 10.50,1.50 10.75,1.24 11.00,1.00 11.25,0.79 11.50,0.63 11.75,0.53 12.00,0.50 12.25,0.53 12.50,0.63 12.75,0.79 13.00,1.00 13.25,1.24 13.50,1.50 13.75,1.76 14.00,2.00 14.25,2.21 14.50,2.37 14.75,2.47 15.00,2.50 15.25,2.47 15.50,2.37 15.75,2.21 16.00,2.00 16.25,1.76 16.50,1.50 16.75,1.24 17.00,1.00 17.25,0.79 17.50,0.63 17.75,0.53 18.00,0.50 18.25,0.53 18.50,0.63 18.75,0.79 19.00,1.00 19.25,1.24 19.50,1.50 19.75,1.76 20.00,2.00 20.25,2.21 20.50,2.37 20.75,2.47 21.00,2.50 21.25,2.47 21.50,2.37 21.75,2.21 22.00,2.00 22.25,1.76 22.50,1.50 22.75,1.24 23.00,1.00 23.25,0.79 23.50,0.63 23.75,0.53 24.00,0.50 24.25,0.53 24.50,0.63 24.75,0.79 25.00,1.00 25.25,1.24 25.50,1.50 25.75,1.76 26.00,2.00 26.25,2.21 26.50,2.37 26.75,2.47 27.00,2.50 27.25,2.47 27.50,2.37 27.75,2.21 28.00,2.00 28.25,1.76 28.50,1.50 28.75,1.24 29.00,1.00 29.25,0.79 29.50,0.63 29.75,0.53 30.00,0.50 30.25,0.53 30.50,0.63 30.75,0.79 31.00,1.00 31.25,1.24 31.50,1.50 31.75,1.76 32.00,2.00 32.25,2.21 32.50,2.37 32.75,2.47 33.00,2.50 33.25,2.47 33.50,2.37 33.75,2.21 34.00,2.00 34.25,1.76 34.50,1.50 34.75,1.24 35.00,1.00 35.25,0.79 35.50,0.63 35.75,0.53 36.00,0.50 36.25,0.53 36.50,0.63 36.75,0.79 37.00,1.00 37.25,1.24 37.50,1.50 37.75,1.76 38.00,2.00 38.25,2.21 38.50,2.37 38.75,2.47 39.00,2.50 39.25,2.47 39.50,2.37 39.75,2.21 40.00,2.00 40.25,1.76 40.50,1.50 40.75,1.24 41.00,1.00 41.25,0.79 41.50,0.63 41.75,0.53 42.00,0.50 42.25,0.53 42.50,0.63 42.75,0.79 43.00,1.00 43.25,1.24 43.50,1.50 43.75,1.76 44.00,2.00 44.25,2.21 44.50,2.37 44.75,2.47 45.00,2.50 45.25,2.47 45.50,2.37 45.75,2.21 46.00,2.00 46.25,1.76 46.50,1.50 46.75,1.24 47.00,1.00 47.25,0.79 47.50,0.63 47.75,0.53 48.00,0.50 48.25,0.53 48.50,0.63 48.75,0.79 49.00,1.00 49.25,1.24 49.50,1.50 49.75,1.76 50.00,2.00 50.25,2.21 50.50,2.37 50.75,2.47 51.00,2.50 51.25,2.47 51.50,2.37 51.75,2.21 52.00,2.00 52.25,1.76 52.50,1.50 52.75,1.24 53.00,1.00 53.25,0.79 53.50,0.63 53.75,0.53 54.00,0.50 54.25,0.53 54.50,0.63 54.75,0.79 55.00,1.00 55.25,1.24 55.50,1.50 55.75,1.76 56.00,2.00 56.25,2.21 56.50,2.37 56.75,2.47 57.00,2.50 57.25,2.47 57.50,2.37 57.75,2.21 58.00,2.00 58.25,1.76 58.50,1.50 58.75,1.24 59.00,1.00 59.25,0.79 59.50,0.63 59.75,0.53 60.00,0.50 60.25,0.53 60.50,0.63 60.75,0.79 61.00,1.00 61.25,1.24 61.50,1.50 61.75,1.76 62.00,2.00 62.25,2.21 62.50,2.37 62.75,2.47 63.00,2.50 63.25,2.47 63.50,2.37 63.75,2.21 64.00,2.00 64.25,1.76 64.50,1.50 64.75,1.24 65.00,1.00 65.25,0.79 65.50,0.63 65.75,0.53 66.00,0.50 66.25,0.53 66.50,0.63 66.75,0.79 67.00,1.00 67.25,1.24 67.50,1.50 67.75,1.76 68.00,2.00 68.25,2.21 68.50,2.37 68.75,2.47 69.00,2.50 69.25,2.47 69.50,2.37 69.75,2.21 70.00,2.00 70.25,1.76 70.50,1.50 70.75,1.24 71.00,1.00 71.25,0.79 71.50,0.63 71.75,0.53 72.00,0.50 72.25,0.53 72.50,0.63 72.75,0.79 73.00,1.00 73.25,1.24 73.50,1.50 73.75,1.76 74.00,2.00 74.25,2.21 74.50,2.37 74.75,2.47 75.00,2.50 75.25,2.47 75.50,2.37 75.75,2.21 76.00,2.00 76.25,1.76 76.50,1.50 76.75,1.24 77.00,1.00 77.25,0.79 77.50,0.63 77.75,0.53 78.00,0.50 78.25,0.53 78.50,0.63 78.75,0.79 79.00,1.00 79.25,1.24 79.50,1.50 79.75,1.76 80.00,2.00 80.25,2.21 80.50,2.37 80.75,2.47 81.00,2.50 81.25,2.47 81.50,2.37 81.75,2.21 82.00,2.00 82.25,1.76 82.50,1.50 82.75,1.24 83.00,1.00 83.25,0.79 83.50,0.63 83.75,0.53 84.00,0.50 84.25,0.53 84.50,0.63 84.75,0.79 85.00,1.00 85.25,1.24 85.50,1.50 85.75,1.76 86.00,2.00 86.25,2.21 86.50,2.37 86.75,2.47 87.00,2.50 87.25,2.47 87.50,2.37 87.75,2.21 88.00,2.00 88.25,1.76 88.50,1.50 88.75,1.24 89.00,1.00 89.25,0.79 89.50,0.63 89.75,0.53 90.00,0.50 90.25,0.53 90.50,0.63 90.75,0.79 91.00,1.00" fill="none" stroke="#FF2020" stroke-width="1.1"/></svg>
<svg style="left:291px;top:457px" width="49" height="3" viewBox="0 0 49 3"><polyline points="0.00,0.50 0.25,0.53 0.50,0.63 0.75,0.79 1.00,1.00 1.25,1.24 1.50,1.50 1.75,1.76 2.00,2.00 2.25,2.21 2.50,2.37 2.75,2.47 3.00,2.50 3.25,2.47 3.50,2.37 3.75,2.21 4.00,2.00 4.25,1.76 4.50,1.50 4.75,1.24 5.00,1.00 5.25,0.79 5.50,0.63 5.75,0.53 6.00,0.50 6.25,0.53 6.50,0.63 6.75,0.79 7.00,1.00 7.25,1.24 7.50,1.50 7.75,1.76 8.00,2.00 8.25,2.21 8.50,2.37 8.75,2.47 9.00,2.50 9.25,2.47 9.50,2.37 9.75,2.21 10.00,2.00 10.25,1.76 10.50,1.50 10.75,1.24 11.00,1.00 11.25,0.79 11.50,0.63 11.75,0.53 12.00,0.50 12.25,0.53 12.50,0.63 12.75,0.79 13.00,1.00 13.25,1.24 13.50,1.50 13.75,1.76 14.00,2.00 14.25,2.21 14.50,2.37 14.75,2.47 15.00,2.50 15.25,2.47 15.50,2.37 15.75,2.21 16.00,2.00 16.25,1.76 16.50,1.50 16.75,1.24 17.00,1.00 17.25,0.79 17.50,0.63 17.75,0.53 18.00,0.50 18.25,0.53 18.50,0.63 18.75,0.79 19.00,1.00 19.25,1.24 19.50,1.50 19.75,1.76 20.00,2.00 20.25,2.21 20.50,2.37 20.75,2.47 21.00,2.50 21.25,2.47 21.50,2.37 21.75,2.21 22.00,2.00 22.25,1.76 22.50,1.50 22.75,1.24 23.00,1.00 23.25,0.79 23.50,0.63 23.75,0.53 24.00,0.50 24.25,0.53 24.50,0.63 24.75,0.79 25.00,1.00 25.25,1.24 25.50,1.50 25.75,1.76 26.00,2.00 26.25,2.21 26.50,2.37 26.75,2.47 27.00,2.50 27.25,2.47 27.50,2.37 27.75,2.21 28.00,2.00 28.25,1.76 28.50,1.50 28.75,1.24 29.00,1.00 29.25,0.79 29.50,0.63 29.75,0.53 30.00,0.50 30.25,0.53 30.50,0.63 30.75,0.79 31.00,1.00 31.25,1.24 31.50,1.50 31.75,1.76 32.00,2.00 32.25,2.21 32.50,2.37 32.75,2.47 33.00,2.50 33.25,2.47 33.50,2.37 33.75,2.21 34.00,2.00 34.25,1.76 34.50,1.50 34.75,1.24 35.00,1.00 35.25,0.79 35.50,0.63 35.75,0.53 36.00,0.50 36.25,0.53 36.50,0.63 36.75,0.79 37.00,1.00 37.25,1.24 37.50,1.50 37.75,1.76 38.00,2.00 38.25,2.21 38.50,2.37 38.75,2.47 39.00,2.50 39.25,2.47 39.50,2.37 39.75,2.21 40.00,2.00 40.25,1.76 40.50,1.50 40.75,1.24 41.00,1.00 41.25,0.79 41.50,0.63 41.75,0.53 42.00,0.50 42.25,0.53 42.50,0.63 42.75,0.79 43.00,1.00 43.25,1.24 43.50,1.50 43.75,1.76 44.00,2.00 44.25,2.21 44.50,2.37 44.75,2.47 45.00,2.50 45.25,2.47 45.50,2.37 45.75,2.21 46.00,2.00 46.25,1.76 46.50,1.50 46.75,1.24 47.00,1.00 47.25,0.79 47.50,0.63 47.75,0.53 48.00,0.50 48.25,0.53 48.50,0.63 48.75,0.79 49.00,1.00" fill="none" stroke="#FF2020" stroke-width="1.1"/></svg>
<svg style="left:354px;top:457px" width="133" height="3" viewBox="0 0 133 3"><polyline points="0.00,0.50 0.25,0.53 0.50,0.63 0.75,0.79 1.00,1.00 1.25,1.24 1.50,1.50 1.75,1.76 2.00,2.00 2.25,2.21 2.50,2.37 2.75,2.47 3.00,2.50 3.25,2.47 3.50,2.37 3.75,2.21 4.00,2.00 4.25,1.76 4.50,1.50 4.75,1.24 5.00,1.00 5.25,0.79 5.50,0.63 5.75,0.53 6.00,0.50 6.25,0.53 6.50,0.63 6.75,0.79 7.00,1.00 7.25,1.24 7.50,1.50 7.75,1.76 8.00,2.00 8.25,2.21 8.50,2.37 8.75,2.47 9.00,2.50 9.25,2.47 9.50,2.37 9.75,2.21 10.00,2.00 10.25,1.76 10.50,1.50 10.75,1.24 11.00,1.00 11.25,0.79 11.50,0.63 11.75,0.53 12.00,0.50 12.25,0.53 12.50,0.63 12.75,0.79 13.00,1.00 13.25,1.24 13.50,1.50 13.75,1.76 14.00,2.00 14.25,2.21 14.50,2.37 14.75,2.47 15.00,2.50 15.25,2.47 15.50,2.37 15.75,2.21 16.00,2.00 16.25,1.76 16.50,1.50 16.75,1.24 17.00,1.00 17.25,0.79 17.50,0.63 17.75,0.53 18.00,0.50 18.25,0.53 18.50,0.63 18.75,0.79 19.00,1.00 19.25,1.24 19.50,1.50 19.75,1.76 20.00,2.00 20.25,2.21 20.50,2.37 20.75,2.47 21.00,2.50 21.25,2.47 21.50,2.37 21.75,2.21 22.00,2.00 22.25,1.76 22.50,1.50 22.75,1.24 23.00,1.00 23.25,0.79 23.50,0.63 23.75,0.53 24.00,0.50 24.25,0.53 24.50,0.63 24.75,0.79 25.00,1.00 25.25,1.24 25.50,1.50 25.75,1.76 26.00,2.00 26.25,2.21 26.50,2.37 26.75,2.47 27.00,2.50 27.25,2.47 27.50,2.37 27.75,2.21 28.00,2.00 28.25,1.76 28.50,1.50 28.75,1.24 29.00,1.00 29.25,0.79 29.50,0.63 29.75,0.53 30.00,0.50 30.25,0.53 30.50,0.63 30.75,0.79 31.00,1.00 31.25,1.24 31.50,1.50 31.75,1.76 32.00,2.00 32.25,2.21 32.50,2.37 32.75,2.47 33.00,2.50 33.25,2.47 33.50,2.37 33.75,2.21 34.00,2.00 34.25,1.76 34.50,1.50 34.75,1.24 35.00,1.00 35.25,0.79 35.50,0.63 35.75,0.53 36.00,0.50 36.25,0.53 36.50,0.63 36.75,0.79 37.00,1.00 37.25,1.24 37.50,1.50 37.75,1.76 38.00,2.00 38.25,2.21 38.50,2.37 38.75,2.47 39.00,2.50 39.25,2.47 39.50,2.37 39.75,2.21 40.00,2.00 40.25,1.76 40.50,1.50 40.75,1.24 41.00,1.00 41.25,0.79 41.50,0.63 41.75,0.53 42.00,0.50 42.25,0.53 42.50,0.63 42.75,0.79 43.00,1.00 43.25,1.24 43.50,1.50 43.75,1.76 44.00,2.00 44.25,2.21 44.50,2.37 44.75,2.47 45.00,2.50 45.25,2.47 45.50,2.37 45.75,2.21 46.00,2.00 46.25,1.76 46.50,1.50 46.75,1.24 47.00,1.00 47.25,0.79 47.50,0.63 47.75,0.53 48.00,0.50 48.25,0.53 48.50,0.63 48.75,0.79 49.00,1.00 49.25,1.24 49.50,1.50 49.75,1.76 50.00,2.00 50.25,2.21 50.50,2.37 50.75,2.47 51.00,2.50 51.25,2.47 51.50,2.37 51.75,2.21 52.00,2.00 52.25,1.76 52.50,1.50 52.75,1.24 53.00,1.00 53.25,0.79 53.50,0.63 53.75,0.53 54.00,0.50 54.25,0.53 54.50,0.63 54.75,0.79 55.00,1.00 55.25,1.24 55.50,1.50 55.75,1.76 56.00,2.00 56.25,2.21 56.50,2.37 56.75,2.47 57.00,2.50 57.25,2.47 57.50,2.37 57.75,2.21 58.00,2.00 58.25,1.76 58.50,1.50 58.75,1.24 59.00,1.00 59.25,0.79 59.50,0.63 59.75,0.53 60.00,0.50 60.25,0.53 60.50,0.63 60.75,0.79 61.00,1.00 61.25,1.24 61.50,1.50 61.75,1.76 62.00,2.00 62.25,2.21 62.50,2.37 62.75,2.47 63.00,2.50 63.25,2.47 63.50,2.37 63.75,2.21 64.00,2.00 64.25,1.76 64.50,1.50 64.75,1.24 65.00,1.00 65.25,0.79 65.50,0.63 65.75,0.53 66.00,0.50 66.25,0.53 66.50,0.63 66.75,0.79 67.00,1.00 67.25,1.24 67.50,1.50 67.75,1.76 68.00,2.00 68.25,2.21 68.50,2.37 68.75,2.47 69.00,2.50 69.25,2.47 69.50,2.37 69.75,2.21 70.00,2.00 70.25,1.76 70.50,1.50 70.75,1.24 71.00,1.00 71.25,0.79 71.50,0.63 71.75,0.53 72.00,0.50 72.25,0.53 72.50,0.63 72.75,0.79 73.00,1.00 73.25,1.24 73.50,1.50 73.75,1.76 74.00,2.00 74.25,2.21 74.50,2.37 74.75,2.47 75.00,2.50 75.25,2.47 75.50,2.37 75.75,2.21 76.00,2.00 76.25,1.76 76.50,1.50 76.75,1.24 77.00,1.00 77.25,0.79 77.50,0.63 77.75,0.53 78.00,0.50 78.25,0.53 78.50,0.63 78.75,0.79 79.00,1.00 79.25,1.24 79.50,1.50 79.75,1.76 80.00,2.00 80.25,2.21 80.50,2.37 80.75,2.47 81.00,2.50 81.25,2.47 81.50,2.37 81.75,2.21 82.00,2.00 82.25,1.76 82.50,1.50 82.75,1.24 83.00,1.00 83.25,0.79 83.50,0.63 83.75,0.53 84.00,0.50 84.25,0.53 84.50,0.63 84.75,0.79 85.00,1.00 85.25,1.24 85.50,1.50 85.75,1.76 86.00,2.00 86.25,2.21 86.50,2.37 86.75,2.47 87.00,2.50 87.25,2.47 87.50,2.37 87.75,2.21 88.00,2.00 88.25,1.76 88.50,1.50 88.75,1.24 89.00,1.00 89.25,0.79 89.50,0.63 89.75,0.53 90.00,0.50 90.25,0.53 90.50,0.63 90.75,0.79 91.00,1.00 91.25,1.24 91.50,1.50 91.75,1.76 92.00,2.00 92.25,2.21 92.50,2.37 92.75,2.47 93.00,2.50 93.25,2.47 93.50,2.37 93.75,2.21 94.00,2.00 94.25,1.76 94.50,1.50 94.75,1.24 95.00,1.00 95.25,0.79 95.50,0.63 95.75,0.53 96.00,0.50 96.25,0.53 96.50,0.63 96.75,0.79 97.00,1.00 97.25,1.24 97.50,1.50 97.75,1.76 98.00,2.00 98.25,2.21 98.50,2.37 98.75,2.47 99.00,2.50 99.25,2.47 99.50,2.37 99.75,2.21 100.00,2.00 100.25,1.76 100.50,1.50 100.75,1.24 101.00,1.00 101.25,0.79 101.50,0.63 101.75,0.53 102.00,0.50 102.25,0.53 102.50,0.63 102.75,0.79 103.00,1.00 103.25,1.24 103.50,1.50 103.75,1.76 104.00,2.00 104.25,2.21 104.50,2.37 104.75,2.47 105.00,2.50 105.25,2.47 105.50,2.37 105.75,2.21 106.00,2.00 106.25,1.76 106.50,1.50 106.75,1.24 107.00,1.00 107.25,0.79 107.50,0.63 107.75,0.53 108.00,0.50 108.25,0.53 108.50,0.63 108.75,0.79 109.00,1.00 109.25,1.24 109.50,1.50 109.75,1.76 110.00,2.00 110.25,2.21 110.50,2.37 110.75,2.47 111.00,2.50 111.25,2.47 111.50,2.37 111.75,2.21 112.00,2.00 112.25,1.76 112.50,1.50 112.75,1.24 113.00,1.00 113.25,0.79 113.50,0.63 113.75,0.53 114.00,0.50 114.25,0.53 114.50,0.63 114.75,0.79 115.00,1.00 115.25,1.24 115.50,1.50 115.75,1.76 116.00,2.00 116.25,2.21 116.50,2.37 116.75,2.47 117.00,2.50 117.25,2.47 117.50,2.37 117.75,2.21 118.00,2.00 118.25,1.76 118.50,1.50 118.75,1.24 119.00,1.00 119.25,0.79 119.50,0.63 119.75,0.53 120.00,0.50 120.25,0.53 120.50,0.63 120.75,0.79 121.00,1.00 121.25,1.24 121.50,1.50 121.75,1.76 122.00,2.00 122.25,2.21 122.50,2.37 122.75,2.47 123.00,2.50 123.25,2.47 123.50,2.37 123.75,2.21 124.00,2.00 124.25,1.76 124.50,1.50 124.75,1.24 125.00,1.00 125.25,0.79 125.50,0.63 125.75,0.53 126.00,0.50 126.25,0.53 126.50,0.63 126.75,0.79 127.00,1.00 127.25,1.24 127.50,1.50 127.75,1.76 128.00,2.00 128.25,2.21 128.50,2.37 128.75,2.47 129.00,2.50 129.25,2.47 129.50,2.37 129.75,2.21 130.00,2.00 130.25,1.76 130.50,1.50 130.75,1.24 131.00,1.00 131.25,0.79 131.50,0.63 131.75,0.53 132.00,0.50 132.25,0.53 132.50,0.63 132.75,0.79 133.00,1.00" fill="none" stroke="#FF2020" stroke-width="1.1"/></svg>
<div class="a" style="left:1001px;top:124px;width:17px;height:338px;background:linear-gradient(90deg,#F3F1EC,#FEFEFB 30%,#FEFEFB 70%,#F3F1EC)"></div>
<div class="a" style="left:1001px;top:124px;width:17px;height:17px;background:#E9ECEE;border-left:1px solid #9BA7B7;border-bottom:1px solid #9BA7B7"></div>
<svg style="left:1005px;top:126px;" width="10" height="13" viewBox="0 0 10 13" shape-rendering="crispEdges"><path d="M4.5 0l-3 3h6z M4.5 13l-3-3h6z" fill="#000" shape-rendering="auto"/><rect x="4" y="2" width="1" height="3" fill="#000"/><rect x="4" y="8" width="1" height="3" fill="#000"/><rect x="0" y="5" width="10" height="1" fill="#000"/><rect x="0" y="7" width="10" height="1" fill="#000"/></svg>
<div class="a" style="left:1002px;top:142px;width:15px;height:14px;background:linear-gradient(135deg,#D4E0FD,#B9CCF9);border:1px solid #B5C8F4;border-radius:2px"></div>
<svg style="left:0;top:0" width="1024" height="710"><path d="M1005.5 151.0 L1009.5 147.0 L1013.5 151.0" fill="none" stroke="#4D6185" stroke-width="2"/></svg>
<div class="a" style="left:1002px;top:159px;width:15px;height:118px;background:linear-gradient(90deg,#C5D4FC,#B9CCF9);border:1px solid #A9BFF3;border-radius:2px;box-shadow:inset 0 0 0 1px #E3EAFE"></div>
<svg style="left:1006px;top:213px;" width="7" height="8" viewBox="0 0 7 8" shape-rendering="crispEdges"><path d="M0 0.5h7M0 2.5h7M0 4.5h7M0 6.5h7" stroke="#9EB5EE"/><path d="M1 1.5h7M1 3.5h7M1 5.5h7M1 7.5h7" stroke="#EEF3FE"/></svg>
<div class="a" style="left:1002px;top:446px;width:15px;height:15px;background:linear-gradient(135deg,#D4E0FD,#B9CCF9);border:1px solid #B5C8F4;border-radius:2px"></div>
<svg style="left:0;top:0" width="1024" height="710"><path d="M1005.5 451.5 L1009.5 455.5 L1013.5 451.5" fill="none" stroke="#4D6185" stroke-width="2"/></svg>
<div class="a" style="left:232px;top:462px;width:786px;height:19px;background:#fff"></div>
<div class="a" style="left:291px;top:462px;width:710px;height:19px;background:linear-gradient(#F3F1EC,#FEFEFB 30%,#FEFEFB 70%,#F3F1EC)"></div>
<div class="a" style="left:232px;top:462px;width:59px;height:19px;background:#fff;border-top:1px solid #F3F1EC"></div>
<div class="t" style="left:237px;top:466px;">100 %</div>
<svg style="left:283px;top:471px;" width="6" height="3" viewBox="0 0 6 3" shape-rendering="crispEdges"><rect x="0" y="0" width="6" height="1" fill="#1B293E"/><rect x="1" y="1" width="4" height="1" fill="#1B293E"/><rect x="2" y="2" width="2" height="1" fill="#1B293E"/></svg>
<div class="a" style="left:292px;top:466px;width:16px;height:14px;background:linear-gradient(135deg,#FFFFFF,#F0EFE9);border:1px solid #E5E2D4;border-radius:2px"></div>
<svg style="left:0;top:0" width="1024" height="710"><path d="M302.0 469.0 L298.0 473.0 L302.0 477.0" fill="none" stroke="#C9C7BA" stroke-width="2"/></svg>
<div class="a" style="left:985px;top:466px;width:16px;height:14px;background:linear-gradient(135deg,#FFFFFF,#F0EFE9);border:1px solid #E5E2D4;border-radius:2px"></div>
<svg style="left:0;top:0" width="1024" height="710"><path d="M991.0 469.0 L995.0 473.0 L991.0 477.0" fill="none" stroke="#C9C7BA" stroke-width="2"/></svg>
<div class="a" style="left:1001px;top:462px;width:17px;height:19px;background:#fff"></div>
<div class="a" style="left:232px;top:481px;width:786px;height:4px;background:#CED4DF;border-radius:0 0 3px 3px"></div>
<div class="a" style="left:232px;top:491px;width:786px;height:19px;background:#FFF2CE;border-radius:3px 3px 0 0"></div>
<div class="t" style="left:233px;top:495px;">Вывод</div>
<svg style="left:974px;top:498px;" width="8" height="4" viewBox="0 0 8 4" shape-rendering="crispEdges"><rect x="0" y="0" width="8" height="1" fill="#65552F"/><rect x="1" y="1" width="6" height="1" fill="#65552F"/><rect x="2" y="2" width="4" height="1" fill="#65552F"/><rect x="3" y="3" width="2" height="1" fill="#65552F"/></svg>
<svg style="left:989px;top:495px;" width="9" height="12" viewBox="0 0 9 12" shape-rendering="crispEdges"><rect x="1.5" y="0.5" width="5" height="6" fill="none" stroke="#65552F"/><rect x="5" y="0" width="2" height="7" fill="#65552F"/><rect x="0" y="6" width="8" height="1" fill="#65552F"/><rect x="4" y="7" width="1" height="5" fill="#65552F"/></svg>
<svg style="left:1004px;top:496px;" width="10" height="9" viewBox="0 0 10 9" shape-rendering="crispEdges"><path d="M0.8 0.5l8.4 8M9.2 0.5l-8.4 8" stroke="#65552F" stroke-width="1.6" shape-rendering="auto"/></svg>
<div class="a" style="left:232px;top:510px;width:786px;height:26px;background:#BCC7D8"></div>
<div class="t" style="left:238px;top:517px;color:#1E2A3E;letter-spacing:0.18px">Показать выходные данные от:</div>
<div class="a" style="left:410px;top:514px;width:300px;height:19px;background:#F0F2F7;border:1px solid #8E9BB0;border-radius:2px"></div>
<div class="t" style="left:413px;top:517px;">Построение</div>
<svg style="left:701px;top:522px;" width="6" height="3" viewBox="0 0 6 3" shape-rendering="crispEdges"><rect x="0" y="0" width="6" height="1" fill="#1B293E"/><rect x="1" y="1" width="4" height="1" fill="#1B293E"/><rect x="2" y="2" width="2" height="1" fill="#1B293E"/></svg>
<div class="a" style="left:716px;top:514px;width:1px;height:18px;background:#7F8CA3"></div>
<div class="a" style="left:745px;top:514px;width:1px;height:18px;background:#7F8CA3"></div>
<div class="a" style="left:796px;top:514px;width:1px;height:18px;background:#7F8CA3"></div>
<div class="a" style="left:825px;top:514px;width:1px;height:18px;background:#7F8CA3"></div>
<svg style="left:724px;top:515px;" width="14" height="17" viewBox="0 0 14 17" shape-rendering="crispEdges"><path d="M2.5 0.5h6l3 3v9h-9z" fill="#EEF0F2" stroke="#9A9EA6"/><path d="M4 4h4M4 6h5M4 8h5" stroke="#B0B4BA"/><path d="M5.5 16v-4h-3l4-4.5l4 4.5h-3v4z" fill="#C8CCD2" stroke="#8E939A" shape-rendering="auto"/></svg>
<svg style="left:751px;top:515px;" width="18" height="17" viewBox="0 0 18 17" shape-rendering="crispEdges"><path d="M8.5 0.5h6l3 3v9h-9z" fill="#EEF0F2" stroke="#9A9EA6"/><path d="M10 4h5M10 6h5M10 8h5" stroke="#A8ACB2"/><path d="M0.5 12l4.5-4.5v3h6v3h-6v3z" fill="#C8CCD2" stroke="#8E939A" shape-rendering="auto"/></svg>
<svg style="left:773px;top:515px;" width="18" height="17" viewBox="0 0 18 17" shape-rendering="crispEdges"><path d="M0.5 0.5h6l3 3v9h-9z" fill="#EEF0F2" stroke="#9A9EA6"/><path d="M2 4h5M2 6h5M2 8h5" stroke="#A8ACB2"/><path d="M17.5 12l-4.5-4.5v3h-6v3h6v3z" fill="#C8CCD2" stroke="#8E939A" shape-rendering="auto"/></svg>
<svg style="left:802px;top:516px;" width="18" height="16" viewBox="0 0 18 16" shape-rendering="crispEdges"><path d="M1 1.5h13M1 3.5h12M1 5.5h11M1 7.5h10M1 9.5h8" stroke="#5A6A84"/><path d="M10 7l7 8M17 7l-7 8" stroke="#E82A1A" stroke-width="2" shape-rendering="auto"/></svg>
<svg style="left:832px;top:516px;" width="17" height="14" viewBox="0 0 17 14" shape-rendering="crispEdges"><rect x="0.5" y="0.5" width="16" height="13" fill="url(#gw)" stroke="#2A4A8A"/><rect x="1" y="1" width="15" height="2" fill="#5A8EE0"/><rect x="4" y="3" width="6" height="1" fill="#fff"/><path d="M12.5 5v4.5h-7.5M7.5 7.5l-2.5 2l2.5 2" fill="none" stroke="#000" stroke-width="1.4"/></svg>
<div class="a" style="left:232px;top:536px;width:786px;height:147px;background:#fff"></div>
<div class="a" style="left:1001px;top:536px;width:17px;height:147px;background:linear-gradient(90deg,#F3F1EC,#FEFEFB 30%,#FEFEFB 70%,#F3F1EC)"></div>
<div class="a" style="left:1002px;top:537px;width:15px;height:15px;background:linear-gradient(135deg,#FFFFFF,#F0EFE9);border:1px solid #E5E2D4;border-radius:2px"></div>
<svg style="left:0;top:0" width="1024" height="710"><path d="M1005.5 546.5 L1009.5 542.5 L1013.5 546.5" fill="none" stroke="#C9C7BA" stroke-width="2"/></svg>
<div class="a" style="left:1002px;top:650px;width:15px;height:15px;background:linear-gradient(135deg,#FFFFFF,#F0EFE9);border:1px solid #E5E2D4;border-radius:2px"></div>
<svg style="left:0;top:0" width="1024" height="710"><path d="M1005.5 655.5 L1009.5 659.5 L1013.5 655.5" fill="none" stroke="#C9C7BA" stroke-width="2"/></svg>
<div class="a" style="left:232px;top:665px;width:769px;height:18px;background:linear-gradient(#F3F1EC,#FEFEFB 30%,#FEFEFB 70%,#F3F1EC)"></div>
<div class="a" style="left:233px;top:667px;width:16px;height:15px;background:linear-gradient(135deg,#FFFFFF,#F0EFE9);border:1px solid #E5E2D4;border-radius:2px"></div>
<svg style="left:0;top:0" width="1024" height="710"><path d="M243.0 670.5 L239.0 674.5 L243.0 678.5" fill="none" stroke="#C9C7BA" stroke-width="2"/></svg>
<div class="a" style="left:984px;top:667px;width:16px;height:15px;background:linear-gradient(135deg,#FFFFFF,#F0EFE9);border:1px solid #E5E2D4;border-radius:2px"></div>
<svg style="left:0;top:0" width="1024" height="710"><path d="M990.0 670.5 L994.0 674.5 L990.0 678.5" fill="none" stroke="#C9C7BA" stroke-width="2"/></svg>
<div class="a" style="left:1001px;top:665px;width:17px;height:18px;background:#fff"></div>
<div class="t" style="left:3px;top:695px;color:#fff">Ошибка при построении</div>
<div class="t" style="left:669px;top:695px;color:#fff">Строка 1</div>
<div class="t" style="left:761px;top:695px;color:#fff">Столбец 1</div>
<div class="t" style="left:853px;top:695px;color:#fff">Знак 1</div>
<div class="t" style="left:988px;top:695px;color:#fff">ВСТ</div>
<div class="a" style="left:124px;top:1px;width:51px;height:17px;background:#E9ECEE;border:1px solid #A3AEBD;border-bottom:none;border-radius:3px 3px 0 0"></div>
<div class="t" style="left:130.5px;top:3px;color:#1B293E">Проект</div>
<div class="a" style="left:124px;top:17px;width:334px;height:124px;background:#E9ECEE;border:1px solid #9BA7B7;box-shadow:1px 1px 0 rgba(0,0,0,0.08)"></div>
<div class="a" style="left:125px;top:17px;width:49px;height:1px;background:#E9ECEE"></div>
<div class="a" style="left:157px;top:42px;width:297px;height:1px;background:#BEC3CB"></div>
<div class="a" style="left:157px;top:89px;width:297px;height:1px;background:#BEC3CB"></div>
<div class="a" style="left:157px;top:114px;width:297px;height:1px;background:#BEC3CB"></div>
<div class="a" style="left:127px;top:116px;width:328px;height:22px;background:linear-gradient(#FFF7DC,#FFEEBB);border:1px solid #E5C365;border-radius:3px"></div>
<div class="t" style="left:161px;top:24px;color:#1B293E;letter-spacing:0.25px">Добавить класс...</div>
<div class="t" style="left:161px;top:49px;color:#1B293E;letter-spacing:0.25px">Добавить новый элемент...</div>
<div class="t" style="left:373px;top:49px;color:#1B293E;letter-spacing:0.35px">Ctrl+Shift+A</div>
<div class="t" style="left:161px;top:71px;color:#1B293E;letter-spacing:0.2px">Существующий элемент...</div>
<div class="t" style="left:373px;top:71px;color:#1B293E;letter-spacing:0.35px">Shift+Alt+A</div>
<div class="t" style="left:161px;top:96px;color:#1B293E;letter-spacing:0px">Назначить запускаемым проектом</div>
<div class="t" style="left:161px;top:121px;color:#1B293E;letter-spacing:0px">Свойства: GLFW...</div>
<div class="t" style="left:373px;top:121px;color:#1B293E;letter-spacing:0.35px">Alt+F7</div>
<svg style="left:128px;top:18px;" width="24" height="22" viewBox="0 0 24 22" shape-rendering="crispEdges">
<g shape-rendering="auto">
<path d="M12.5 11v4.5h3.5" fill="none" stroke="#9A9A9A" stroke-width="1.2"/>
<path d="M6 11.5l2.4 2.4l4.6-4.9l-1.5-2.2z" fill="#5A9AE8" stroke="#1A3AC0" stroke-width="0.9"/>
<path d="M13.9 11.5l2.5 2.1l3.6-3.4l-2.5-2.3z" fill="#F090F0" stroke="#A030B0" stroke-width="0.9"/>
<path d="M14 17.5l2.4 2.3l3.6-3.4l-2.4-2.3z" fill="#7AB8F8" stroke="#1A4AC0" stroke-width="0.9"/>
</g>
<g shape-rendering="auto"><rect x="4" y="4" width="7" height="7" fill="#F3D35A" opacity="0.85"/><path d="M7.5 4v7M4 7.5h7M5 5l5 5M10 5l-5 5" stroke="#E8B820" stroke-width="1"/><circle cx="7.5" cy="7.5" r="1.6" fill="#FFFBE0"/></g></svg>
<svg style="left:132px;top:48px;" width="17" height="15" viewBox="0 0 17 15" shape-rendering="crispEdges">
<rect x="1.5" y="2.5" width="14" height="11" fill="url(#wg)" stroke="#34466A"/>
<rect x="8" y="5" width="2" height="2" fill="#6B5CE0"/><rect x="11" y="5" width="2" height="2" fill="#F29A1F"/>
<rect x="5" y="9" width="2" height="2" fill="#2E8DE8"/><rect x="8" y="9" width="2" height="2" fill="#E8351E"/><rect x="11" y="9" width="2" height="2" fill="#1E9A2E"/>
<g shape-rendering="auto"><rect x="0" y="0" width="7" height="7" fill="#F3D35A" opacity="0.85"/><path d="M3.5 0v7M0 3.5h7M1 1l5 5M6 1l-5 5" stroke="#E8B820" stroke-width="1"/><circle cx="3.5" cy="3.5" r="1.6" fill="#FFFBE0"/></g></svg>
<svg style="left:132px;top:69px;" width="17" height="14" viewBox="0 0 17 14" shape-rendering="crispEdges">
<rect x="1.5" y="0.5" width="14" height="12" fill="#F4F6FB" stroke="#2F3F5E"/>
<rect x="5" y="3" width="2" height="2" fill="#E070D0"/><rect x="8" y="3" width="2" height="2" fill="#6B5CE0"/><rect x="11" y="3" width="2" height="2" fill="#F29A1F"/>
<rect x="5" y="7" width="2" height="2" fill="#2E8DE8"/><rect x="8" y="7" width="2" height="2" fill="#E8351E"/><rect x="11" y="7" width="2" height="2" fill="#1E9A2E"/>
</svg>
<svg style="left:132px;top:120px;" width="16" height="15" viewBox="0 0 16 15" shape-rendering="crispEdges">
<rect x="0.5" y="0.5" width="15" height="14" fill="url(#wg)" stroke="#8A9ABA"/>
<path d="M15.5 3v12h-15" stroke="#2A3A5A" fill="none"/>
<rect x="0" y="0" width="16" height="3" fill="#5A8EF0"/>
<path d="M2.5 5.5h11.5v6.5h-11.5z" fill="#FFFFFF" stroke="#8A9098"/>
<rect x="3" y="5" width="4" height="1" fill="#F2C040"/>
<rect x="8" y="4" width="5" height="2" fill="#A0A8B0"/>
<rect x="4" y="7" width="2" height="1" fill="#2A2AF0"/>
<rect x="4" y="9" width="2" height="1" fill="#2A2AF0"/>
<rect x="6" y="9" width="5" height="1" fill="#3A6AD8"/>
</svg>
</body></html>
